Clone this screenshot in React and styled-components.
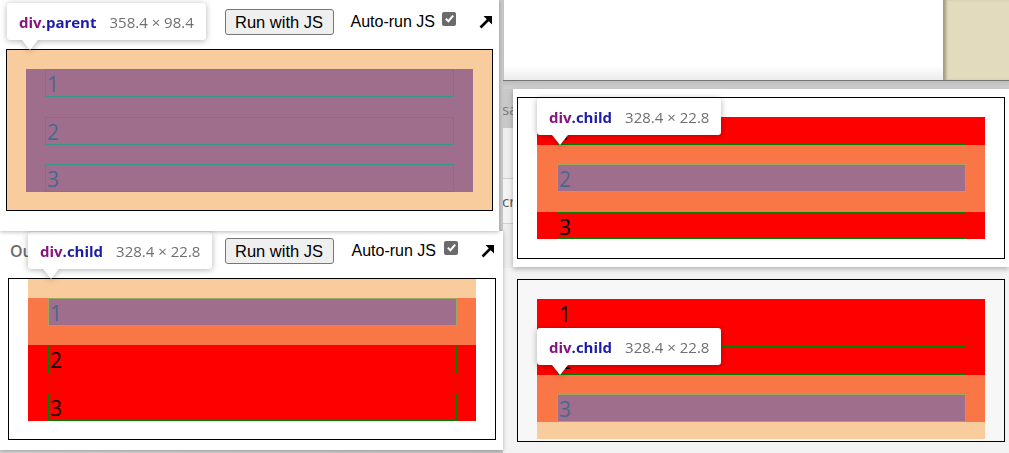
import React from "react";
import styled, { createGlobalStyle } from "styled-components";

const C = {
  peach: "#f8cc9d",
  purple: "#a06e8d",
  orange: "#f97646",
  red: "#ff0000",
  green: "#007f00",
  teal: "#36978b",
  khaki: "#a0a65e",
  blueText: "#48698f",
};

const GlobalStyle = createGlobalStyle`
  html, body { margin: 0; padding: 0; background: #d4d4d4; }
  #root { width: 1009px; height: 453px; }
`;

const Stage = styled.div`
  width: 1009px;
  height: 453px;
  overflow: hidden;
  display: grid;
  grid-template-columns: 503px 506px;
  background: #d4d4d4;
`;

/* ---------- left column ---------- */
const LeftColumn = styled.div`
  display: flex;
  flex-direction: column;
  background: linear-gradient(to right, #d8d8d8, #c9c9c9);
`;

const EditorCard = styled.div`
  position: relative;
  box-sizing: border-box;
  width: ${(p) => p.$w}px;
  height: ${(p) => p.$h}px;
  background: #fff;
  box-shadow: 0 1px 4px rgba(0, 0, 0, 0.28);
  z-index: ${(p) => p.$z};
  flex-shrink: 0;
`;

const Toolbar = styled.div`
  display: flex;
  align-items: center;
  justify-content: flex-end;
  height: ${(p) => p.$h}px;
  padding-right: ${(p) => p.$pr}px;
  font-family: "Liberation Sans", Arial, sans-serif;
`;

const OutputLabel = styled.span`
  margin-right: auto;
  padding-left: 10px;
  font: 600 16px "Open Sans", "Noto Sans", sans-serif;
  color: #6b6b6b;
`;

const RunButton = styled.button`
  box-sizing: border-box;
  width: 109px;
  height: 26px;
  padding: 0;
  margin-right: ${(p) => p.$mr}px;
  background: #efefef;
  border: 1px solid #767676;
  border-radius: 3px;
  font: 16.5px "Liberation Sans", Arial, sans-serif;
  color: #000;
`;

const AutoLabel = styled.span`
  font: 16px "Liberation Sans", Arial, sans-serif;
  color: #000;
`;

const CheckBox = styled.span`
  display: inline-flex;
  align-items: center;
  justify-content: center;
  width: 14px;
  height: 14px;
  margin-left: ${(p) => p.$ml}px;
  margin-bottom: 7px;
  background: #6b6b6b;
  border-radius: 2px;
`;

const PopIcon = styled.svg`
  width: 14px;
  height: 14px;
  margin-left: 23px;
  display: block;
`;

const OutputBox = styled.div`
  position: relative;
  box-sizing: border-box;
  width: ${(p) => p.$w}px;
  height: ${(p) => p.$h}px;
  margin: ${(p) => p.$m};
  border: 1px solid #000;
  background: ${(p) => p.$bg};
  padding: ${(p) => p.$pad};
  display: flex;
  flex-direction: column;
`;

const Band = styled.div`
  box-sizing: border-box;
  height: ${(p) => p.$h}px;
  flex-shrink: 0;
  background: ${(p) => p.$bg};
  padding: ${(p) => p.$pad || "0 19px 0 20px"};
  display: flex;
  flex-direction: column;
  gap: ${(p) => p.$gap || 0}px;
`;

const Child = styled.div`
  box-sizing: border-box;
  height: ${(p) => p.$h || 28}px;
  flex-shrink: 0;
  border: 1px solid ${(p) => p.$border};
  background: ${(p) => p.$bg || "transparent"};
  color: ${(p) => p.$color || "#000"};
  font: 21px/24px "Open Sans", "Noto Sans", sans-serif;
  padding: 2px 0 0 1px;
`;

/* ---------- tooltip ---------- */
const Tip = styled.div`
  position: absolute;
  left: ${(p) => p.$x}px;
  top: ${(p) => p.$y}px;
  z-index: 5;
  height: 37px;
  box-sizing: border-box;
  padding: 0 12px;
  display: flex;
  align-items: center;
  gap: 13px;
  background: #fff;
  border-radius: 3px;
  filter: drop-shadow(0 1px 3px rgba(0, 0, 0, 0.3));
  font-family: "Open Sans", "Noto Sans", sans-serif;
  font-size: 15px;
  white-space: nowrap;
  &::after {
    content: "";
    position: absolute;
    left: 15px;
    top: 37px;
    border-left: 8.5px solid transparent;
    border-right: 8.5px solid transparent;
    border-top: 10px solid #fff;
  }
`;

const TipTag = styled.span`
  font-weight: 700;
  color: #1c1ca8;
  & > b {
    color: #881280;
    font-weight: 700;
  }
`;

const TipSize = styled.span`
  color: #6f6f6f;
`;

/* ---------- right column ---------- */
const RightColumn = styled.div`
  display: flex;
  flex-direction: column;
`;

const TopStrip = styled.div`
  display: flex;
  height: 80px;
  flex-shrink: 0;
`;

const StripEdge = styled.div`
  width: 1px;
  background: #cbc5ab;
`;

const WhitePane = styled.div`
  flex: 1;
  background: linear-gradient(to bottom, #ffffff 82%, #ececec);
`;

const BeigePane = styled.div`
  width: 66px;
  background: #e2dbbe;
  box-shadow: inset 4px 0 3px -1px rgba(90, 80, 50, 0.45);
`;

const GrayBar = styled.div`
  height: 8px;
  flex-shrink: 0;
  border-top: 1px solid #767676;
  background: linear-gradient(to bottom, #bdbdbd, #d2d2d2);
`;

const RightBody = styled.div`
  flex: 1;
  display: flex;
  min-height: 0;
`;

const Sidebar = styled.div`
  width: 10px;
  flex-shrink: 0;
  display: flex;
  flex-direction: column;
  overflow: hidden;
  background: #efefef;
  font: 15px "Open Sans", "Noto Sans", sans-serif;
`;

const SideBlock = styled.div`
  box-sizing: border-box;
  height: ${(p) => p.$h}px;
  flex-shrink: 0;
  background: ${(p) => p.$bg};
  border-top: ${(p) => (p.$lined ? "1px solid #cfcfcf" : "0")};
  border-bottom: ${(p) => (p.$lined ? "1px solid #cfcfcf" : "0")};
  color: ${(p) => p.$color || "#777"};
  display: flex;
  align-items: center;
  white-space: nowrap;
  margin-left: -1px;
`;

const RightMain = styled.div`
  flex: 1;
  display: flex;
  flex-direction: column;
`;

const PreviewCard = styled.div`
  position: relative;
  z-index: 1;
  height: 178px;
  box-sizing: border-box;
  flex-shrink: 0;
  padding: 8px 4px 0 4px;
  background: #fff;
  box-shadow: 0 2px 5px rgba(0, 0, 0, 0.28);
`;

const PreviewArea = styled.div`
  flex: 1;
  box-sizing: border-box;
  padding: 12px 4px 0 4px;
  background: #f3f3f3;
`;

/* ---------- pieces ---------- */
const Check = () => (
  <svg width="11" height="11" viewBox="0 0 12 12">
    <path d="M2 6.3 L4.8 9 L10 2.8" fill="none" stroke="#fff" strokeWidth="2.2" />
  </svg>
);

const Pop = () => (
  <PopIcon viewBox="0 0 14 14">
    <path d="M1.5 12.5 L9.5 4.5" stroke="#000" strokeWidth="2.6" />
    <path d="M4.5 1 H13 V9.5 Z" fill="#000" />
  </PopIcon>
);

const Bar = ({ h, pr, mr, ml, label }) => (
  <Toolbar $h={h} $pr={pr}>
    {label && <OutputLabel>{label}</OutputLabel>}
    <RunButton $mr={mr}>Run with JS</RunButton>
    <AutoLabel>Auto-run JS</AutoLabel>
    <CheckBox $ml={ml}>
      <Check />
    </CheckBox>
    <Pop />
  </Toolbar>
);

const Tooltip = ({ x, y, cls, size }) => (
  <Tip $x={x} $y={y}>
    <TipTag>
      <b>div</b>.{cls}
    </TipTag>
    <TipSize>{size}</TipSize>
  </Tip>
);

export default function App() {
  return (
    <>
      <GlobalStyle />
      <Stage>
        <LeftColumn>
          <EditorCard $w={499} $h={231} $z={2}>
            <Bar h={44} pr={6} mr={17} ml={7} />
            <OutputBox $w={487} $h={162} $m="5px 0 0 6px" $bg={C.peach} $pad="19px 19px 19px 19px">
              <Band $h={123} $bg={C.purple} $pad="0 19px" $gap={19.5}>
                <Child $border={C.teal} $color={C.blueText}>1</Child>
                <Child $border={C.teal} $color={C.blueText}>2</Child>
                <Child $border={C.teal} $color={C.blueText}>3</Child>
              </Band>
            </OutputBox>
            <Tooltip x={7} y={3} cls="parent" size="358.4 × 98.4" />
          </EditorCard>
          <EditorCard $w={503} $h={219} $z={1}>
            <Bar h={40} pr={8} mr={18} ml={8} label="Output" />
            <OutputBox $w={488} $h={162} $m="7px 0 0 8px" $bg="#fff" $pad="0 19px">
              <Band $h={19} $bg={C.peach} />
              <Band $h={47} $bg={C.orange}>
                <Child $border={C.khaki} $bg={C.purple} $color={C.blueText}>1</Child>
              </Band>
              <Band $h={76} $bg={C.red} $gap={19}>
                <Child $h={29} $border={C.green}>2</Child>
                <Child $border={C.green}>3</Child>
              </Band>
            </OutputBox>
            <Tooltip x={28} y={1} cls="child" size="328.4 × 22.8" />
          </EditorCard>
        </LeftColumn>

        <RightColumn>
          <TopStrip>
            <StripEdge />
            <WhitePane />
            <BeigePane />
          </TopStrip>
          <GrayBar />
          <RightBody>
            <Sidebar>
              <SideBlock $h={39} $bg="#c8c8c8" $color="#7a7a7a">sa</SideBlock>
              <SideBlock $h={50} $bg="#eeeeee" />
              <SideBlock $h={46} $bg="#f3f3f3" $lined $color="#555">cri</SideBlock>
              <SideBlock $h={44} $bg="#ededed" />
              <SideBlock $h={190} $bg="#f3f3f3" />
            </Sidebar>
            <RightMain>
              <PreviewCard>
                <OutputBox $w={488} $h={162} $m="0" $bg="#fff" $pad="19px 19px 0 19px">
                  <Band $h={28} $bg={C.red}>
                    <Child $border={C.green}>1</Child>
                  </Band>
                  <Band $h={67} $bg={C.orange} $pad="19px 19px 0 20px">
                    <Child $border={C.khaki} $bg={C.purple} $color={C.blueText}>2</Child>
                  </Band>
                  <Band $h={27} $bg={C.red}>
                    <Child $h={27} $border={C.green}>3</Child>
                  </Band>
                  <Tooltip x={19} y={0} cls="child" size="328.4 × 22.8" />
                </OutputBox>
              </PreviewCard>
              <PreviewArea>
                <OutputBox $w={488} $h={163} $m="0" $bg="#f7f7f7" $pad="19px 19px 0 19px">
                  <Band $h={76} $bg={C.red} $gap={18}>
                    <Child $h={29} $border={C.green}>1</Child>
                    <Child $h={29} $border={C.green}>2</Child>
                  </Band>
                  <Band $h={47} $bg={C.orange} $pad="19px 19px 0 20px">
                    <Child $h={28} $border={C.khaki} $bg={C.purple} $color={C.blueText}>3</Child>
                  </Band>
                  <Band $h={17} $bg={C.peach} />
                  <Tooltip x={19} y={48} cls="child" size="328.4 × 22.8" />
                </OutputBox>
              </PreviewArea>
            </RightMain>
          </RightBody>
        </RightColumn>
      </Stage>
    </>
  );
}
